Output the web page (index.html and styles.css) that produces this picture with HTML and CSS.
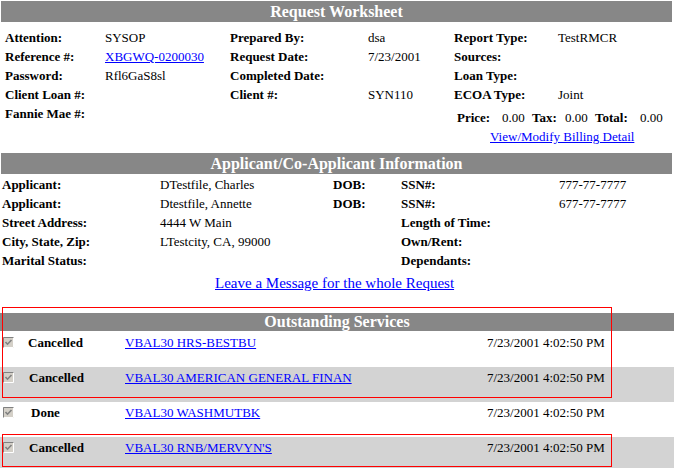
FILE: index.html
```html
<!DOCTYPE html>
<html lang="en">
<head>
    <meta charset="UTF-8">
    <title>Request Worksheet</title>
    <link rel="stylesheet" href="styles.css">
</head>
<body>
    <div class="page">
        <div class="bar">Request Worksheet</div>
        <div class="worksheet">
            <b>Attention:</b><span>SYSOP</span><b>Prepared By:</b><span>dsa</span><b>Report Type:</b><span>TestRMCR</span>
            <b>Reference #:</b><span><a href="#">XBGWQ-0200030</a></span><b>Request Date:</b><span>7/23/2001</span><b>Sources:</b><span></span>
            <b>Password:</b><span>Rfl6GaS8sl</span><b>Completed Date:</b><span></span><b>Loan Type:</b><span></span>
            <b>Client Loan #:</b><span></span><b>Client #:</b><span>SYN110</span><b>ECOA Type:</b><span>Joint</span>
            <b>Fannie Mae #:</b><span></span><span></span><span></span>
            <div class="billing">
                <b>Price:</b><span>0.00</span><b>Tax:</b><span>0.00</span><b>Total:</b><span>0.00</span>
            </div>
            <div class="billing-link"><a href="#">View/Modify Billing Detail</a></div>
        </div>

        <div class="bar bar-second">Applicant/Co-Applicant Information</div>
        <div class="applicant">
            <b>Applicant:</b><span>DTestfile, Charles</span><b>DOB:</b><b>SSN#:</b><span>777-77-7777</span>
            <b>Applicant:</b><span>Dtestfile, Annette</span><b>DOB:</b><b>SSN#:</b><span>677-77-7777</span>
            <b>Street Address:</b><span>4444 W Main</span><span></span><b>Length of Time:</b><span></span>
            <b>City, State, Zip:</b><span>LTestcity, CA, 99000</span><span></span><b>Own/Rent:</b><span></span>
            <b>Marital Status:</b><span></span><span></span><b>Dependants:</b><span></span>
        </div>
        <div class="message"><a href="#">Leave a Message for the whole Request</a></div>

        <div class="services">
            <div class="bar bar-services">Outstanding Services</div>
            <div class="service">
                <span class="check"><svg width="11" height="11" viewBox="0 0 11 11"><rect width="11" height="11" fill="#d4d0c8"/><path d="M0.5 11V0.5H11" stroke="#808080" fill="none"/><path d="M10.5 0.5V10.5H0.5" stroke="#ffffff" fill="none"/><path d="M2.5 5l2 2.2 4-4.2" stroke="#808080" stroke-width="1.6" fill="none"/></svg></span>
                <b>Cancelled</b><a href="#">VBAL30 HRS-BESTBU</a><span>7/23/2001 4:02:50 PM</span>
            </div>
            <div class="service alt">
                <span class="check"><svg width="11" height="11" viewBox="0 0 11 11"><rect width="11" height="11" fill="#d4d0c8"/><path d="M0.5 11V0.5H11" stroke="#808080" fill="none"/><path d="M10.5 0.5V10.5H0.5" stroke="#ffffff" fill="none"/><path d="M2.5 5l2 2.2 4-4.2" stroke="#808080" stroke-width="1.6" fill="none"/></svg></span>
                <b class="status-b">Cancelled</b><a href="#">VBAL30 AMERICAN GENERAL FINAN</a><span>7/23/2001 4:02:50 PM</span>
            </div>
            <div class="service">
                <span class="check"><svg width="11" height="11" viewBox="0 0 11 11"><rect width="11" height="11" fill="#d4d0c8"/><path d="M0.5 11V0.5H11" stroke="#808080" fill="none"/><path d="M10.5 0.5V10.5H0.5" stroke="#ffffff" fill="none"/><path d="M2.5 5l2 2.2 4-4.2" stroke="#808080" stroke-width="1.6" fill="none"/></svg></span>
                <b class="status-done">Done</b><a href="#">VBAL30 WASHMUTBK</a><span>7/23/2001 4:02:50 PM</span>
            </div>
            <div class="service alt">
                <span class="check"><svg width="11" height="11" viewBox="0 0 11 11"><rect width="11" height="11" fill="#d4d0c8"/><path d="M0.5 11V0.5H11" stroke="#808080" fill="none"/><path d="M10.5 0.5V10.5H0.5" stroke="#ffffff" fill="none"/><path d="M2.5 5l2 2.2 4-4.2" stroke="#808080" stroke-width="1.6" fill="none"/></svg></span>
                <b class="status-b">Cancelled</b><a href="#">VBAL30 RNB/MERVYN'S</a><span>7/23/2001 4:02:50 PM</span>
            </div>
            <div class="mark mark-one"></div>
            <div class="mark mark-two"></div>
        </div>
    </div>
</body>
</html>
```

FILE: styles.css
```css
body {
    margin: 0;
    font-family: "Liberation Serif", "Times New Roman", serif;
    font-size: 13px;
    color: #000;
    background: #fff;
}
a {
    color: #0000ff;
}
b, span, a {
    white-space: nowrap;
}
.page {
    padding-top: 1px;
    width: 677px;
    overflow: hidden;
}
.bar {
    margin-left: 1px;
    width: 671px;
    height: 21px;
    line-height: 21px;
    background-color: #878787;
    color: #fff;
    font-weight: bold;
    font-size: 16px;
    text-align: center;
}
.worksheet {
    display: grid;
    grid-template-columns: 100px 125px 138px 86px 104px 1fr;
    grid-auto-rows: 19px;
    line-height: 19px;
    margin-top: 6px;
    padding-left: 5px;
}
.billing {
    grid-column: 5 / span 2;
    display: grid;
    grid-template-columns: 45px 30px 33px 30px 45px auto;
    padding-top: 4px;
    margin-left: 3px;
}
.billing-link {
    grid-column: 5 / span 2;
    grid-row: 6;
    padding-top: 4px;
    margin-left: 36px;
}
.bar-second {
    margin-top: 11px;
}
.applicant {
    display: grid;
    grid-template-columns: 158px 173px 68px 158px 1fr;
    grid-auto-rows: 19px;
    line-height: 19px;
    margin-top: 1px;
    padding-left: 2px;
}
.message {
    margin-top: 4px;
    padding-left: 215px;
    font-size: 15px;
    line-height: 18px;
}
.services {
    position: relative;
    margin-top: 21px;
    width: 674px;
}
.bar-services {
    margin-left: 0;
    width: 674px;
    height: 18px;
    line-height: 18px;
}
.service {
    display: grid;
    grid-template-columns: 25px 97px 362px 1fr;
    height: 35px;
    padding: 2px 0 0 3px;
    box-sizing: border-box;
    line-height: 17px;
}
.service:nth-child(2) {
    height: 36px;
    padding-top: 3px;
}
.service.alt {
    background-color: #d3d3d3;
}
.check {
    padding-top: 3px;
    line-height: 0;
}
.status-b {
    padding-left: 1px;
}
.status-done {
    padding-left: 3px;
}
.mark {
    position: absolute;
    left: 2px;
    width: 610px;
    border: 1px solid #ff0000;
    box-sizing: border-box;
}
.mark-one {
    top: -6px;
    height: 91px;
}
.mark-two {
    top: 121px;
    height: 33px;
}
```
